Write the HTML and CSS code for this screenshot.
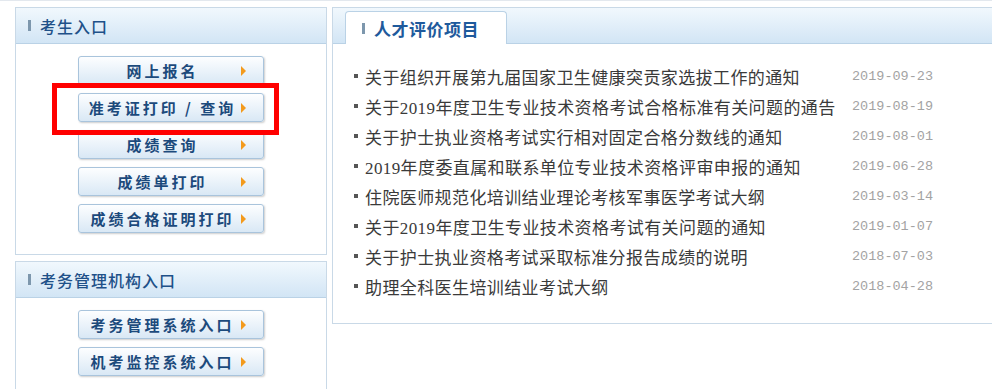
FILE: index.html
```html
<!DOCTYPE html>
<html lang="zh-CN">
<head>
    <meta charset="UTF-8">
    <title>人才评价项目</title>
    <link rel="stylesheet" href="styles.css">
</head>
<body>
    <div class="page">
        <div class="side">
            <div class="box">
                <div class="box-head"><span class="bar"></span>考生入口</div>
                <div class="box-body">
                    <a class="btn" href="#"><span class="btn-text">网上报名</span><span class="arrow"></span></a>
                    <a class="btn" href="#"><span class="btn-text">准考证打印 / 查询</span><span class="arrow"></span></a>
                    <a class="btn" href="#"><span class="btn-text">成绩查询</span><span class="arrow"></span></a>
                    <a class="btn" href="#"><span class="btn-text">成绩单打印</span><span class="arrow"></span></a>
                    <a class="btn" href="#"><span class="btn-text">成绩合格证明打印</span><span class="arrow"></span></a>
                </div>
            </div>
            <div class="box">
                <div class="box-head"><span class="bar"></span>考务管理机构入口</div>
                <div class="box-body">
                    <a class="btn" href="#"><span class="btn-text">考务管理系统入口</span><span class="arrow"></span></a>
                    <a class="btn" href="#"><span class="btn-text">机考监控系统入口</span><span class="arrow"></span></a>
                </div>
            </div>
        </div>
        <div class="main">
            <div class="main-head">
                <div class="tab"><span class="bar"></span>人才评价项目</div>
            </div>
            <ul class="news">
                <li><span class="dot"></span><a class="title" href="#">关于组织开展第九届国家卫生健康突贡家选拔工作的通知</a><span class="date">2019-09-23</span></li>
                <li><span class="dot"></span><a class="title" href="#">关于2019年度卫生专业技术资格考试合格标准有关问题的通告</a><span class="date">2019-08-19</span></li>
                <li><span class="dot"></span><a class="title" href="#">关于护士执业资格考试实行相对固定合格分数线的通知</a><span class="date">2019-08-01</span></li>
                <li><span class="dot"></span><a class="title" href="#">2019年度委直属和联系单位专业技术资格评审申报的通知</a><span class="date">2019-06-28</span></li>
                <li><span class="dot"></span><a class="title" href="#">住院医师规范化培训结业理论考核军事医学考试大纲</a><span class="date">2019-03-14</span></li>
                <li><span class="dot"></span><a class="title" href="#">关于2019年度卫生专业技术资格考试有关问题的通知</a><span class="date">2019-01-07</span></li>
                <li><span class="dot"></span><a class="title" href="#">关于护士执业资格考试采取标准分报告成绩的说明</a><span class="date">2018-07-03</span></li>
                <li><span class="dot"></span><a class="title" href="#">助理全科医生培训结业考试大纲</a><span class="date">2018-04-28</span></li>
            </ul>
        </div>
    </div>
    <div class="mark"></div>
</body>
</html>
```

FILE: styles.css
```css
body {
    margin: 0;
    font-family: "Noto Sans CJK SC", sans-serif;
    background-color: #fff;
    overflow: hidden;
    border-top: 1px solid #e3e8ee;
}
a {
    text-decoration: none;
}
.page {
    display: flex;
    gap: 5px;
    padding: 6px 0 0 15px;
    align-items: flex-start;
}
.side {
    width: 312px;
    flex: none;
    display: flex;
    flex-direction: column;
    gap: 6px;
}
.box {
    border: 1px solid #c9d9e7;
    background-color: #fff;
}
.box-head {
    height: 35px;
    display: flex;
    align-items: center;
    padding-left: 12px;
    background: linear-gradient(#f1f8fd, #d2e5f5);
    border-bottom: 1px solid #bad2e6;
    font-size: 16px;
    font-weight: 500;
    letter-spacing: 1px;
    color: #1f5189;
}
.bar {
    width: 3px;
    height: 11px;
    background-color: #7d97ad;
    margin-right: 9px;
}
.box-body {
    display: flex;
    flex-direction: column;
    align-items: center;
    gap: 8px;
    padding: 12px 0 21px;
}
.btn {
    width: 184px;
    height: 27px;
    display: flex;
    align-items: center;
    border: 1px solid #a9c4dc;
    border-radius: 3px;
    background: linear-gradient(#fdfeff, #d9e8f5);
    box-shadow: 1px 1px 2px rgba(0, 0, 0, 0.2);
}
.btn-text {
    flex: 1;
    text-align: center;
    padding-left: 7px;
    font-size: 15px;
    font-weight: bold;
    letter-spacing: 3px;
    color: #1c4a7c;
    white-space: nowrap;
}
.arrow {
    width: 0;
    height: 0;
    border-left: 5px solid #f39a1c;
    border-top: 5px solid transparent;
    border-bottom: 5px solid transparent;
    margin: 0 17px 0 2px;
}
.main {
    flex: 1;
    height: 315px;
    border: 1px solid #c9d9e7;
    border-right: none;
}
.main-head {
    height: 35px;
    display: flex;
    align-items: flex-end;
    padding-left: 12px;
    background: linear-gradient(#f1f8fd, #d2e5f5);
    border-bottom: 1px solid #bad2e6;
}
.tab {
    width: 144px;
    height: 32px;
    display: flex;
    align-items: center;
    padding-left: 16px;
    margin-bottom: -1px;
    background-color: #fff;
    border: 1px solid #bad2e6;
    border-bottom: none;
    border-radius: 4px 4px 0 0;
    font-size: 17px;
    font-weight: bold;
    letter-spacing: 0.5px;
    color: #1e5a9c;
}
.news {
    list-style: none;
    margin: 0;
    padding: 17px 0 0 21px;
}
.news li {
    height: 30px;
    display: flex;
    align-items: center;
}
.dot {
    width: 4px;
    height: 4px;
    background-color: #555;
    margin-right: 7px;
}
.title {
    width: 487px;
    font-family: "Liberation Serif", "Noto Sans CJK SC", serif;
    font-size: 17px;
    letter-spacing: 0.4px;
    color: #3a3a3a;
    white-space: nowrap;
}
.date {
    font-family: "Liberation Mono", monospace;
    font-size: 13.5px;
    color: #a3a3a3;
}
.mark {
    position: absolute;
    left: 52px;
    top: 83px;
    width: 227px;
    height: 52px;
    box-sizing: border-box;
    border: 5px solid #ff0000;
}
```
